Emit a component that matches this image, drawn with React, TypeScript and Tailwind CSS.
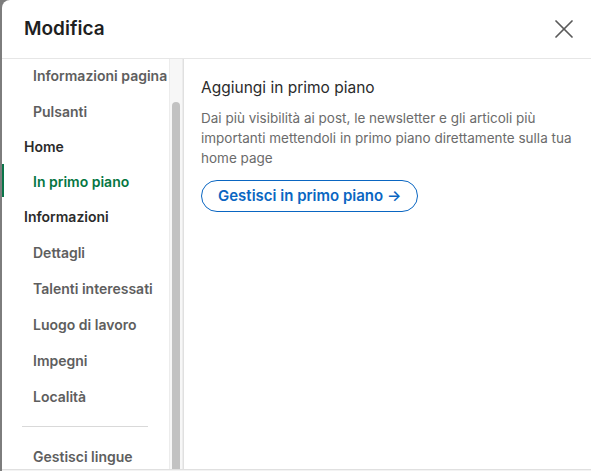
import { X } from "lucide-react";

type NavItem = { label: string; kind: "header" | "item"; active?: boolean };

const items: NavItem[] = [
  { label: "Informazioni pagina", kind: "item" },
  { label: "Pulsanti", kind: "item" },
  { label: "Home", kind: "header" },
  { label: "In primo piano", kind: "item", active: true },
  { label: "Informazioni", kind: "header" },
  { label: "Dettagli", kind: "item" },
  { label: "Talenti interessati", kind: "item" },
  { label: "Luogo di lavoro", kind: "item" },
  { label: "Impegni", kind: "item" },
  { label: "Località", kind: "item" },
];

function SideNav() {
  return (
    <div className="flex h-full w-[182px] shrink-0 border-r border-[#e0e0e0]">
      <div className="-mt-[2px] flex w-[168px] flex-col overflow-hidden whitespace-nowrap">
        {items.map((it) =>
          it.kind === "header" ? (
            <div
              key={it.label}
              className="flex h-[35px] shrink-0 items-center pl-[22px] text-[14px] font-semibold text-[#2b2b2b]"
            >
              {it.label}
            </div>
          ) : (
            <div
              key={it.label}
              className={
                it.active
                  ? "relative flex h-[35px] shrink-0 items-center pl-[31px] text-[14px] font-semibold text-[#057642]"
                  : "flex h-9 shrink-0 items-center pl-[31px] text-[14px] font-semibold text-[#5e5e5e]"
              }
            >
              {it.active && (
                <span className="absolute left-[-2px] top-0 h-[33px] w-1 bg-[#0a7449]" />
              )}
              {it.label}
            </div>
          )
        )}
        <div className="flex h-6 shrink-0 items-center pl-5">
          <div className="h-px w-[126px] bg-[#d9d9d9]" />
        </div>
        <div className="flex h-9 shrink-0 items-center pl-[31px] text-[14px] font-semibold text-[#5e5e5e]">
          Gestisci lingue
        </div>
      </div>
      <div className="flex w-[14px] flex-col border-x border-[#ececec] bg-[#f7f7f7] px-[2px] pt-[43px]">
        <div className="flex-1 rounded-t-full bg-[#c2c2c2]" />
      </div>
    </div>
  );
}

function Content() {
  return (
    <div className="flex flex-1 flex-col pl-[17px] pt-[19px]">
      <h2 className="text-[15.5px] leading-5 text-[#2b2b2b]">Aggiungi in primo piano</h2>
      <p className="mt-[10px] w-[378px] text-[13.5px] leading-5 text-[#6b6b6b]">
        Dai più visibilità ai post, le newsletter e gli articoli più importanti mettendoli in
        primo piano direttamente sulla tua home page
      </p>
      <button className="mt-[12px] flex h-8 w-fit items-center rounded-full border border-[#0a66c2] px-4 text-[15px] font-semibold text-[#0a66c2]">
        Gestisci in primo piano →
      </button>
    </div>
  );
}

export default function App() {
  return (
    <div
      className="h-[471px] w-[591px] overflow-hidden bg-[#7d7d7d] pl-[2px]"
      style={{ fontFamily: "Inter, 'Noto Sans', sans-serif" }}
    >
      <div className="flex h-full flex-col overflow-hidden rounded-tl-lg bg-white">
        <div className="flex h-[59px] shrink-0 items-center justify-between border-b border-[#e6e6e6] pl-[22px] pr-[11px]">
          <h1 className="text-[19px] font-semibold text-[#1f1f1f]">Modifica</h1>
          <X className="h-8 w-8 text-[#5a5a5a]" strokeWidth={1.3} />
        </div>
        <div className="flex min-h-0 flex-1">
          <SideNav />
          <Content />
        </div>
        <div className="h-[2px] shrink-0 border-t border-[#e0e0e0] bg-[#f3f3f3]" />
      </div>
    </div>
  );
}
